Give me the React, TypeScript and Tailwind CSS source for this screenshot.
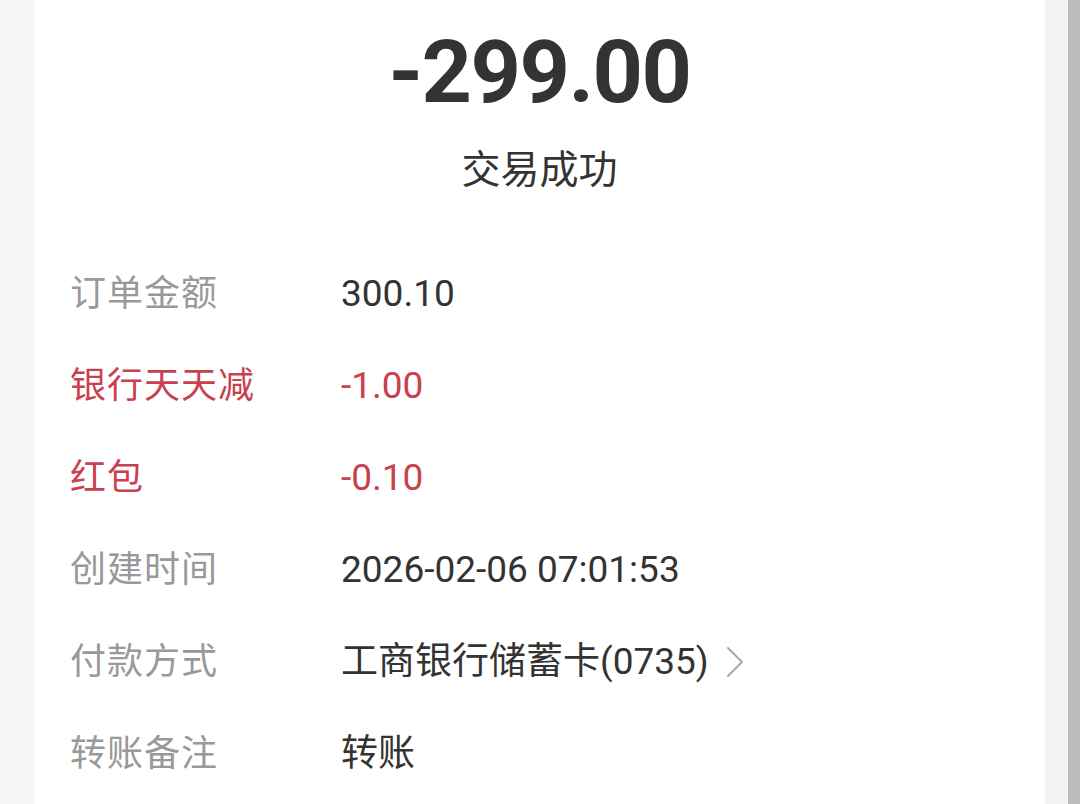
import { ChevronRight } from 'lucide-react'

const RED = 'text-[#c9404f]'

interface Row {
  label: string
  value: string
  red?: boolean
  link?: boolean
}

const rows: Row[] = [
  { label: '订单金额', value: '300.10' },
  { label: '银行天天减', value: '-1.00', red: true },
  { label: '红包', value: '-0.10', red: true },
  { label: '创建时间', value: '2026-02-06 07:01:53' },
  { label: '付款方式', value: '工商银行储蓄卡(0735)', link: true },
  { label: '转账备注', value: '转账' },
]

export default function App() {
  return (
    <div
      className="flex h-[804px] w-full overflow-hidden bg-[#f5f5f5]"
      style={{ fontFamily: 'Roboto, "Noto Sans CJK SC", sans-serif' }}
    >
      <div className="w-[34px] shrink-0 bg-[#f5f5f5]" />

      <main className="flex flex-1 flex-col bg-white">
        <div className="mt-[27px] text-center text-[88px] font-bold leading-[90px] tracking-[-1.5px] text-[#333333]">
          -299.00
        </div>
        <div className="mt-[29px] text-center text-[39px] leading-[48px] text-[#333333]">
          交易成功
        </div>

        <div className="mt-[54px] flex flex-col pl-[36px]">
          {rows.map((r) => (
            <div key={r.label} className="flex h-[92px] items-center">
              <div
                className={`w-[271px] shrink-0 text-[36px] tracking-[1px] ${r.red ? RED : 'text-[#999999]'}`}
              >
                {r.label}
              </div>
              <div
                className={`flex items-center text-[37px] ${r.red ? RED : 'text-[#333333]'}`}
              >
                {r.value}
                {r.link && (
                  <ChevronRight
                    className="-my-[10px] ml-[-2px] h-[56px] w-[56px] text-[#aaaaaa]"
                    strokeWidth={0.9}
                  />
                )}
              </div>
            </div>
          ))}
        </div>
      </main>

      <div className="w-[23px] shrink-0 bg-[#f4f4f4]" />
      <div className="w-[12px] shrink-0 bg-[#bdbdbd]" />
    </div>
  )
}
